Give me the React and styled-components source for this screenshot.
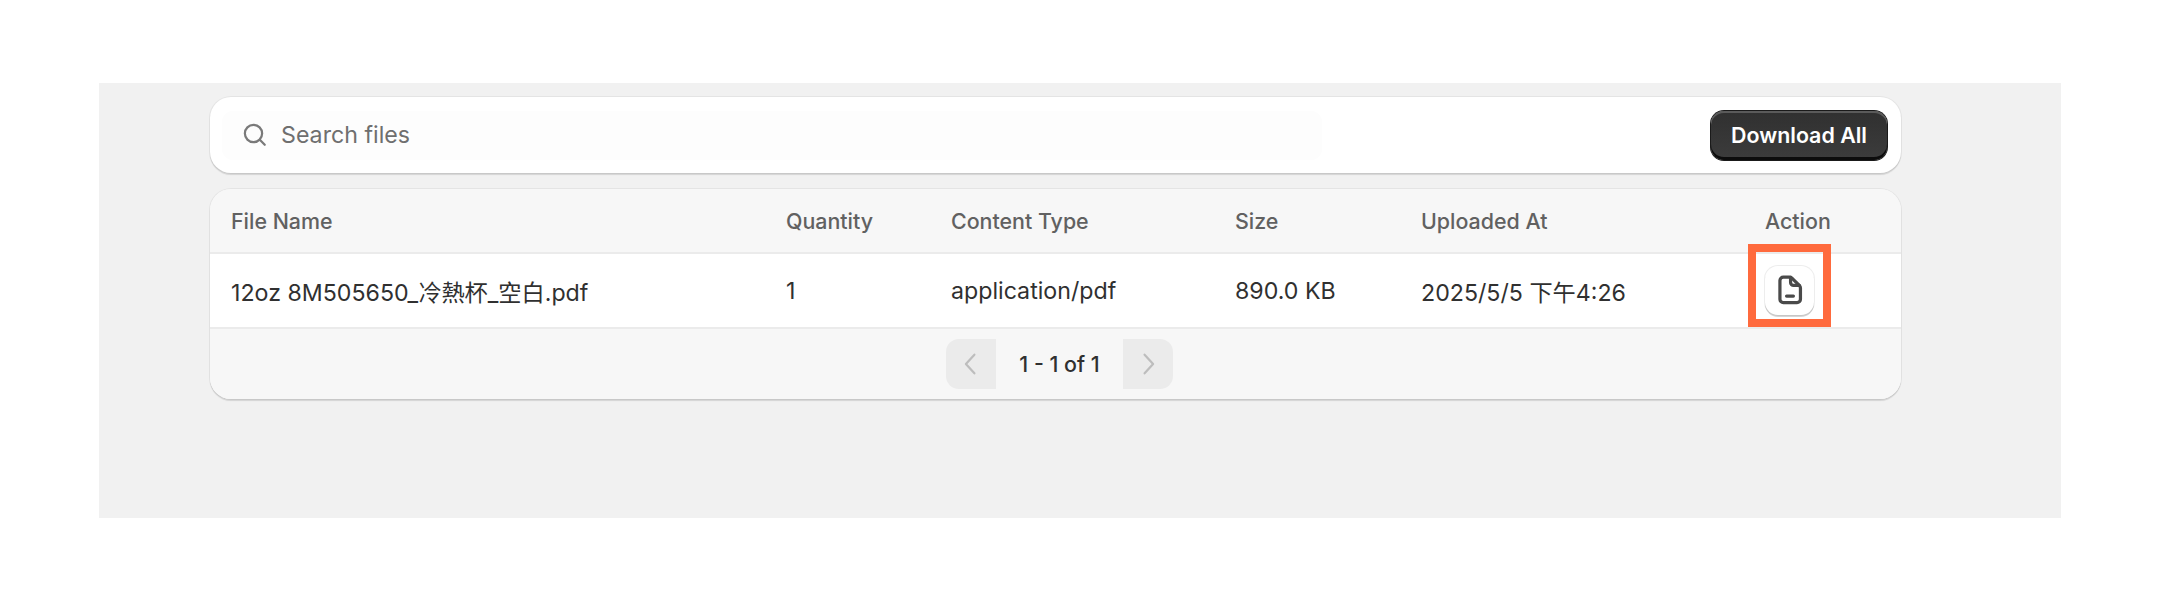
import React from 'react'
import styled, { createGlobalStyle } from 'styled-components'

const GlobalStyle = createGlobalStyle`
  html, body {
    margin: 0;
    background: #fff;
  }
  body {
    font-family: Inter, "Noto Sans CJK TC", sans-serif;
    font-size: 23.2px;
    color: #303030;
  }
`

const Page = styled.div`
  padding: 83px 99px 82px;
`

const Panel = styled.div`
  height: 435px;
  box-sizing: border-box;
  background: #f1f1f1;
  padding: 14px 160px 0 111px;
  display: flex;
  flex-direction: column;
  gap: 16px;
`

const Card = styled.div`
  background: ${(p) => p.$bg || '#fff'};
  border-radius: 21px;
  box-shadow: 0 0 0 1px rgba(0, 0, 0, 0.05), 0 2px 1px 0 rgba(0, 0, 0, 0.12);
  overflow: hidden;
`

const SearchBar = styled(Card)`
  height: 76px;
  box-sizing: border-box;
  display: flex;
  align-items: center;
  padding: 0 14px 0 12px;
`

const SearchField = styled.div`
  width: 1100px;
  height: 49px;
  background: #fdfdfd;
  border-radius: 11px;
  display: flex;
  align-items: center;
  gap: 11px;
  padding-left: 18px;
  box-sizing: border-box;
  color: #6f6f6f;
`

const DownloadButton = styled.button`
  margin-left: auto;
  width: 176px;
  height: 49px;
  padding: 0;
  border: none;
  border-radius: 13px;
  color: #fff;
  font: 600 21.4px Inter, sans-serif;
  background: linear-gradient(#303030, #3c3c3c);
  box-shadow: inset 0 -3px 0 #0c0c0c, inset 0 2px 0 #5a5a5a, 0 0 0 1px #1a1a1a;
`

const Row = styled.div`
  display: grid;
  grid-template-columns: 555px 165px 284px 186px 344px 65px;
  padding: 0 71px 0 21px;
  align-items: center;
  height: ${(p) => p.$height}px;
  box-sizing: border-box;
  border-bottom: ${(p) => (p.$line ? '2px solid #ebebeb' : 'none')};
`

const HeadRow = styled(Row)`
  background: #f7f7f7;
  color: #616161;
  font-size: 21.4px;
  font-weight: 550;
`

const BodyRow = styled(Row)`
  background: #fff;
`

const ActionWrap = styled.div`
  position: relative;
  width: 49px;
  height: 49px;
`

const IconButton = styled.button`
  width: 49px;
  height: 49px;
  padding: 0 0 2px;
  border: none;
  border-radius: 13px;
  background: #fff;
  display: flex;
  align-items: center;
  justify-content: center;
  box-shadow: 0 0 0 1px rgba(0, 0, 0, 0.07), 0 2px 0 0 rgba(0, 0, 0, 0.16);
`

const Highlight = styled.div`
  position: absolute;
  left: -17px;
  top: -22px;
  width: 83px;
  height: 83px;
  box-sizing: border-box;
  border: 8px solid #ff6a3d;
`

const Footer = styled.div`
  height: 70px;
  background: #f7f7f7;
  display: flex;
  align-items: center;
  justify-content: center;
  padding-left: 8px;
`

const PageButton = styled.button`
  width: 50px;
  height: 50px;
  padding: 0;
  border: none;
  background: #ebebeb;
  color: #bdbdbd;
  display: flex;
  align-items: center;
  justify-content: center;
  border-radius: ${(p) => (p.$side === 'left' ? '13px 0 0 13px' : '0 13px 13px 0')};
`

const PageLabel = styled.span`
  width: 127px;
  text-align: center;
  font-size: 21.4px;
  font-weight: 500;
`

const SearchIcon = () => (
  <svg width="30" height="30" viewBox="0 0 20 20" fill="none" stroke="#7a7a7a" strokeWidth="1.5" strokeLinecap="round">
    <circle cx="9" cy="9" r="5.75" />
    <path d="M13.2 13.2 16.5 16.5" />
  </svg>
)

const FileIcon = () => (
  <svg width="38" height="38" viewBox="0 0 20 20" fill="none" stroke="#4a4a4a" strokeWidth="1.7" strokeLinejoin="round" strokeLinecap="round">
    <path d="M6.5 3.2h3.2c.5 0 1 .2 1.3.5l3.9 3.9c.4.4.6.9.6 1.4v5.9c0 1-.8 1.8-1.8 1.8H6.5c-1 0-1.8-.8-1.8-1.8V5c0-1 .8-1.8 1.8-1.8Z" />
    <path d="M10.3 3.4V6c0 .9.7 1.6 1.6 1.6h3" />
    <path d="M8.2 13.2h3.6" />
  </svg>
)

const Chevron = ({ d }) => (
  <svg width="34" height="34" viewBox="0 0 20 20" fill="none" stroke="currentColor" strokeWidth="1.3" strokeLinecap="round" strokeLinejoin="round">
    <path d={d} />
  </svg>
)

const App = () => {
  return (
    <Page>
      <GlobalStyle />
      <Panel>
        <SearchBar>
          <SearchField>
            <SearchIcon />
            Search files
          </SearchField>
          <DownloadButton>Download All</DownloadButton>
        </SearchBar>
        <Card $bg="#f7f7f7">
          <HeadRow $height={65} $line>
            <span>File Name</span>
            <span>Quantity</span>
            <span>Content Type</span>
            <span>Size</span>
            <span>Uploaded At</span>
            <span>Action</span>
          </HeadRow>
          <BodyRow $height={75} $line>
            <span>12oz 8M505650_冷熱杯_空白.pdf</span>
            <span>1</span>
            <span>application/pdf</span>
            <span>890.0 KB</span>
            <span>2025/5/5 下午4:26</span>
            <ActionWrap>
              <IconButton>
                <FileIcon />
              </IconButton>
              <Highlight />
            </ActionWrap>
          </BodyRow>
          <Footer>
            <PageButton $side="left">
              <Chevron d="M12 4.5 7 10l5 5.5" />
            </PageButton>
            <PageLabel>1 - 1 of 1</PageLabel>
            <PageButton $side="right">
              <Chevron d="M8 4.5 13 10l-5 5.5" />
            </PageButton>
          </Footer>
        </Card>
      </Panel>
    </Page>
  )
}

export default App
